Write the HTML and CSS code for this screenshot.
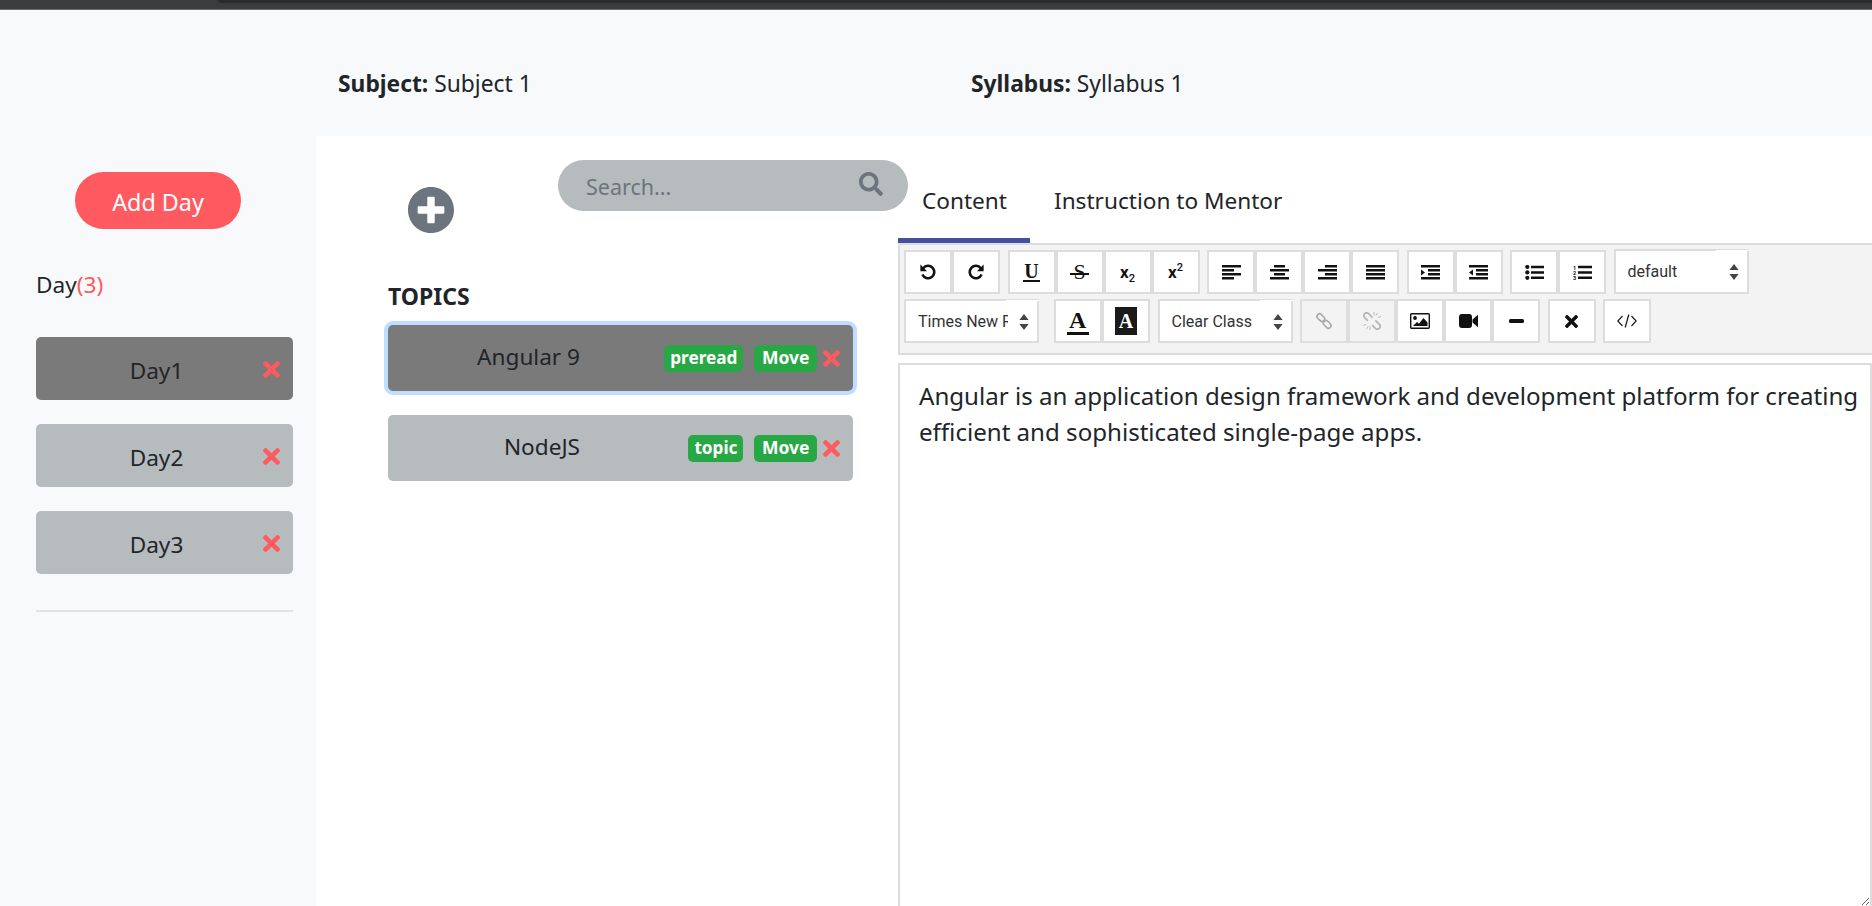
FILE: index.html
```html
<!DOCTYPE html>
<html lang="en">
<head>
<meta charset="utf-8">
<title>Syllabus editor</title>
<link rel="stylesheet" href="styles.css">
</head>
<body>
<div class="topbar"><div class="topbar-inner"></div></div>
<header class="head">
  <div class="head-subject"><b>Subject:</b> Subject 1</div>
  <div class="head-syllabus"><b>Syllabus:</b> Syllabus 1</div>
</header>
<main class="main">
  <aside class="side">
    <button class="add-day">Add Day</button>
    <div class="day-count">Day<span class="red">(3)</span></div>
    <div class="day active"><span class="day-name">Day1</span><svg class="x" viewBox="0 80 352 352"><path d="M242.72 256l100.07-100.07c12.28-12.28 12.28-32.19 0-44.48l-22.24-22.24c-12.28-12.28-32.19-12.28-44.48 0L176 189.28 75.93 89.21c-12.28-12.28-32.19-12.28-44.48 0L9.21 111.45c-12.28 12.28-12.28 32.19 0 44.48L109.28 256 9.21 356.07c-12.28 12.28-12.28 32.19 0 44.48l22.24 22.24c12.28 12.28 32.2 12.28 44.48 0L176 322.72l100.07 100.07c12.28 12.28 32.2 12.28 44.48 0l22.24-22.24c12.28-12.28 12.28-32.19 0-44.48L242.72 256z"/></svg></div>
    <div class="day"><span class="day-name">Day2</span><svg class="x" viewBox="0 80 352 352"><path d="M242.72 256l100.07-100.07c12.28-12.28 12.28-32.19 0-44.48l-22.24-22.24c-12.28-12.28-32.19-12.28-44.48 0L176 189.28 75.93 89.21c-12.28-12.28-32.19-12.28-44.48 0L9.21 111.45c-12.28 12.28-12.28 32.19 0 44.48L109.28 256 9.21 356.07c-12.28 12.28-12.28 32.19 0 44.48l22.24 22.24c12.28 12.28 32.2 12.28 44.48 0L176 322.72l100.07 100.07c12.28 12.28 32.2 12.28 44.48 0l22.24-22.24c12.28-12.28 12.28-32.19 0-44.48L242.72 256z"/></svg></div>
    <div class="day"><span class="day-name">Day3</span><svg class="x" viewBox="0 80 352 352"><path d="M242.72 256l100.07-100.07c12.28-12.28 12.28-32.19 0-44.48l-22.24-22.24c-12.28-12.28-32.19-12.28-44.48 0L176 189.28 75.93 89.21c-12.28-12.28-32.19-12.28-44.48 0L9.21 111.45c-12.28 12.28-12.28 32.19 0 44.48L109.28 256 9.21 356.07c-12.28 12.28-12.28 32.19 0 44.48l22.24 22.24c12.28 12.28 32.2 12.28 44.48 0L176 322.72l100.07 100.07c12.28 12.28 32.2 12.28 44.48 0l22.24-22.24c12.28-12.28 12.28-32.19 0-44.48L242.72 256z"/></svg></div>
    <hr class="rule">
  </aside>
  <section class="topics">
    <div class="search"><span class="search-text">Search...</span><svg class="search-ic" viewBox="0 0 512 512"><path d="M505 442.7L405.3 343c-4.5-4.5-10.6-7-17-7H372c27.6-35.3 44-79.7 44-128C416 93.1 322.9 0 208 0S0 93.1 0 208s93.1 208 208 208c48.3 0 92.7-16.4 128-44v16.3c0 6.4 2.5 12.5 7 17l99.7 99.7c9.4 9.4 24.6 9.4 33.9 0l28.3-28.3c9.4-9.4 9.4-24.6.1-34zM208 336c-70.7 0-128-57.2-128-128 0-70.7 57.2-128 128-128 70.7 0 128 57.2 128 128 0 70.7-57.2 128-128 128z"/></svg></div>
    <svg class="plus" viewBox="8 8 496 496"><path d="M256 8C119 8 8 119 8 256s111 248 248 248 248-111 248-248S393 8 256 8zm144 276c0 6.6-5.4 12-12 12h-92v92c0 6.6-5.4 12-12 12h-56c-6.6 0-12-5.4-12-12v-92h-92c-6.6 0-12-5.4-12-12v-56c0-6.6 5.4-12 12-12h92v-92c0-6.6 5.4-12 12-12h56c6.6 0 12 5.4 12 12v92h92c6.6 0 12 5.4 12 12v56z"/></svg>
    <h2 class="topics-title">TOPICS</h2>
    <div class="topic active"><span class="topic-name">Angular 9</span><span class="badge badge-first">preread</span><span class="badge">Move</span><svg class="x" viewBox="0 80 352 352"><path d="M242.72 256l100.07-100.07c12.28-12.28 12.28-32.19 0-44.48l-22.24-22.24c-12.28-12.28-32.19-12.28-44.48 0L176 189.28 75.93 89.21c-12.28-12.28-32.19-12.28-44.48 0L9.21 111.45c-12.28 12.28-12.28 32.19 0 44.48L109.28 256 9.21 356.07c-12.28 12.28-12.28 32.19 0 44.48l22.24 22.24c12.28 12.28 32.2 12.28 44.48 0L176 322.72l100.07 100.07c12.28 12.28 32.2 12.28 44.48 0l22.24-22.24c12.28-12.28 12.28-32.19 0-44.48L242.72 256z"/></svg></div>
    <div class="topic"><span class="topic-name">NodeJS</span><span class="badge badge-first">topic</span><span class="badge">Move</span><svg class="x" viewBox="0 80 352 352"><path d="M242.72 256l100.07-100.07c12.28-12.28 12.28-32.19 0-44.48l-22.24-22.24c-12.28-12.28-32.19-12.28-44.48 0L176 189.28 75.93 89.21c-12.28-12.28-32.19-12.28-44.48 0L9.21 111.45c-12.28 12.28-12.28 32.19 0 44.48L109.28 256 9.21 356.07c-12.28 12.28-12.28 32.19 0 44.48l22.24 22.24c12.28 12.28 32.2 12.28 44.48 0L176 322.72l100.07 100.07c12.28 12.28 32.2 12.28 44.48 0l22.24-22.24c12.28-12.28 12.28-32.19 0-44.48L242.72 256z"/></svg></div>
  </section>
  <section class="content">
    <nav class="tabs">
      <span class="tab tab-on">Content</span>
      <span class="tab">Instruction to Mentor</span>
    </nav>
    <div class="toolbar">
      <div class="row">
        <div class="grp">
          <span class="btn"><svg class="ic ic-sq" viewBox="0 0 18 18"><path d="M4.2 5.2A6.2 6.2 0 1 1 3.4 11.5" fill="none" stroke="#111" stroke-width="2.6"/><path d="M1.4 1.6v6.6h6.6z"/></svg></span>
          <span class="btn"><svg class="ic ic-sq" viewBox="0 0 18 18"><path d="M13.8 5.2A6.2 6.2 0 1 0 14.6 11.5" fill="none" stroke="#111" stroke-width="2.6"/><path d="M16.6 1.6v6.6H10z"/></svg></span>
        </div>
        <div class="grp">
          <span class="btn"><span class="serif under">U</span></span>
          <span class="btn"><span class="serif thin strike">S</span></span>
          <span class="btn"><span class="script">x<sub>2</sub></span></span>
          <span class="btn"><span class="script">x<sup>2</sup></span></span>
        </div>
        <div class="grp">
          <span class="btn"><svg class="ic" viewBox="0 0 19 15"><path d="M0 0h19v2.6H0zM0 4h12v2.6H0zM0 8h19v2.6H0zM0 12h12v2.6H0z"/></svg></span>
          <span class="btn"><svg class="ic" viewBox="0 0 19 15"><path d="M4 0h11v2.6H4zM0 4h19v2.6H0zM4 8h11v2.6H4zM0 12h19v2.6H0z"/></svg></span>
          <span class="btn"><svg class="ic" viewBox="0 0 19 15"><path d="M7 0h12v2.6H7zM0 4h19v2.6H0zM7 8h12v2.6H7zM0 12h19v2.6H0z"/></svg></span>
          <span class="btn"><svg class="ic" viewBox="0 0 19 15"><path d="M0 0h19v2.6H0zM0 4h19v2.6H0zM0 8h19v2.6H0zM0 12h19v2.6H0z"/></svg></span>
        </div>
        <div class="grp">
          <span class="btn"><svg class="ic" viewBox="0 0 19 15"><path d="M0 0h19v2.6H0zM7 4h12v2.6H7zM7 8h12v2.6H7zM0 12h19v2.6H0zM0 4.4l4 3-4 3z"/></svg></span>
          <span class="btn"><svg class="ic" viewBox="0 0 19 15"><path d="M0 0h19v2.6H0zM7 4h12v2.6H7zM7 8h12v2.6H7zM0 12h19v2.6H0zM4 4.4l-4 3 4 3z"/></svg></span>
        </div>
        <div class="grp">
          <span class="btn"><svg class="ic" viewBox="0 0 19 15"><circle cx="2.3" cy="2" r="2.1"/><circle cx="2.3" cy="7.4" r="2.1"/><circle cx="2.3" cy="12.8" r="2.1"/><path d="M6 .8h13v2.5H6zM6 6.2h13v2.5H6zM6 11.6h13v2.5H6z"/></svg></span>
          <span class="btn"><svg class="ic" viewBox="0 0 19 15"><text class="ol-num" x="0" y="4.6">1</text><text class="ol-num" x="0" y="9.8">2</text><text class="ol-num" x="0" y="15">3</text><path d="M5 .8h14v2.5H5zM5 6.2h14v2.5H5zM5 11.6h14v2.5H5z"/></svg></span>
        </div>
        <div class="sel sel-style"><span class="sel-text">default</span><svg class="caret" viewBox="0 0 10 16"><path d="M5 0l4.6 6H.4zM5 16l4.6-6H.4z"/></svg></div>
      </div>
      <div class="row">
        <div class="sel sel-font"><span class="sel-text">Times New Roman</span><svg class="caret" viewBox="0 0 10 16"><path d="M5 0l4.6 6H.4zM5 16l4.6-6H.4z"/></svg></div>
        <div class="grp grp-color">
          <span class="btn"><span class="fore"><span class="serif">A</span></span></span>
          <span class="btn"><span class="back"><span class="serif">A</span></span></span>
        </div>
        <div class="sel sel-clear"><span class="sel-text">Clear Class</span><svg class="caret" viewBox="0 0 10 16"><path d="M5 0l4.6 6H.4zM5 16l4.6-6H.4z"/></svg></div>
        <div class="grp">
          <span class="btn off"><svg class="ic ic-sq" viewBox="0 0 18 18"><g fill="none" stroke="#aaa" stroke-width="1.6"><rect x="1.5" y="3" width="8.6" height="5.2" rx="2.6" transform="rotate(45 5.8 5.6)"/><rect x="7.9" y="9.8" width="8.6" height="5.2" rx="2.6" transform="rotate(45 12.2 12.4)"/></g></svg></span>
          <span class="btn off"><svg class="ic ic-sq" viewBox="0 0 18 18"><g fill="none" stroke="#b5b5b5" stroke-width="1.7"><g transform="rotate(45 9 9)"><path d="M7 6.2H1.5a2.8 2.8 0 0 0 0 5.6H6M11 6.2h5.5a2.8 2.8 0 0 1 0 5.6H12"/></g><path stroke-width=".9" d="M11 0v3.4M14.5 .8l-1.6 2.8M18 4.5l-3 1.2M0 13.5l3-1.2M3.5 17.2l1.6-2.8M7 18v-3.4"/></g></svg></span>
          <span class="btn"><svg class="ic ic-pic" viewBox="0 0 20 16"><rect x=".7" y=".7" width="18.6" height="14.6" rx="1" fill="none" stroke="#111" stroke-width="1.4"/><circle cx="5" cy="5" r="1.9"/><path d="M3 13l4-4 2 1.8L13.5 5 17.5 9.5V13z"/></svg></span>
          <span class="btn"><svg class="ic ic-vid" viewBox="0 0 19 14"><rect x="0" y="0" width="13" height="14" rx="3"/><path d="M13.5 5.5L19 .8v12.4l-5.5-4.7z"/></svg></span>
          <span class="btn"><svg class="ic ic-vid" viewBox="0 0 19 14"><rect x="2" y="5" width="15" height="4" rx="1.5"/></svg></span>
        </div>
        <div class="grp">
          <span class="btn"><svg class="ic ic-close" viewBox="0 80 352 352"><path d="M242.72 256l100.07-100.07c12.28-12.28 12.28-32.19 0-44.48l-22.24-22.24c-12.28-12.28-32.19-12.28-44.48 0L176 189.28 75.93 89.21c-12.28-12.28-32.19-12.28-44.48 0L9.21 111.45c-12.28 12.28-12.28 32.19 0 44.48L109.28 256 9.21 356.07c-12.28 12.28-12.28 32.19 0 44.48l22.24 22.24c12.28 12.28 32.2 12.28 44.48 0L176 322.72l100.07 100.07c12.28 12.28 32.2 12.28 44.48 0l22.24-22.24c12.28-12.28 12.28-32.19 0-44.48L242.72 256z"/></svg></span>
        </div>
        <div class="grp">
          <span class="btn"><svg class="ic ic-code" viewBox="0 0 20 14"><path d="M5.5 2L.8 7l4.7 5M14.5 2l4.7 5-4.7 5M11.8 .5L8.2 13.5" fill="none" stroke="#222" stroke-width="1.3"/></svg></span>
        </div>
      </div>
    </div>
    <div class="editor">Angular is an application design framework and development platform for creating efficient and sophisticated single-page apps.</div>
  </section>
</main>
</body>
</html>
```
FILE: styles.css
```css
* { box-sizing: border-box; }
html, body { margin: 0; height: 906px; overflow: hidden; }
body {
  background: #f8f9fa;
  color: #212529;
  font-family: "Noto Sans", "Open Sans", sans-serif;
  font-size: 22.6px;
}
.topbar {
  height: 10px;
  background: #3c3c3c;
  border-bottom: 1px solid #6a6a6a;
  padding-left: 218px;
}
.topbar-inner {
  height: 3px;
  background: #2b2b2b;
  border-bottom-left-radius: 4px;
}
.head {
  height: 126px;
  display: flex;
  align-items: center;
  padding: 20px 0 0 338px;
  font-size: 22.8px;
}
.head-subject { width: 633px; }
.main { display: flex; height: 772px; }
.side {
  width: 316px;
  flex: none;
  padding: 36px 23px 0 36px;
  display: flex;
  flex-direction: column;
}
.add-day {
  align-self: flex-start;
  margin-left: 39px;
  width: 166px;
  height: 57px;
  padding: 2px 0 0;
  border: 0;
  border-radius: 29px;
  background: #ff5a5f;
  color: #fff;
  font: inherit;
  font-size: 23.3px;
}
.day-count { margin-top: 41px; margin-bottom: 37px; line-height: 30px; }
.red { color: #ff5a5f; }
.day {
  height: 63px;
  margin-bottom: 24px;
  border-radius: 5px;
  background: #b6bbbd;
  display: flex;
  align-items: center;
  padding-right: 13px;
}
.day.active, .topic.active { background: #7a7a7a; }
.day-name { flex: 1; text-align: center; padding: 3px 0 0 14px; }
.x { width: 17px; height: 17px; fill: #ff5a5f; flex: none; }
.day .x { margin-top: 2px; }
.rule { width: 100%; margin: 12px 0 0; border: 0; border-top: 2px solid #e0e2e4; }
.topics {
  width: 582px;
  flex: none;
  background: #fff;
  padding: 51px 0 0 72px;
  position: relative;
}
.search {
  position: absolute;
  left: 242px;
  top: 24px;
  width: 350px;
  height: 51px;
  border-radius: 26px;
  background: #b6bbbd;
  color: #6c757d;
  display: flex;
  align-items: center;
  justify-content: space-between;
  padding: 2px 25px 0 28px;
  font-size: 21.5px;
  z-index: 1;
}
.search-ic { width: 24px; height: 24px; fill: #6c757d; margin-bottom: 6px; }
.plus { display: block; width: 46px; height: 46px; margin-left: 20px; fill: #6c757d; }
.topics-title { margin: 48px 0 14px; font-size: 23px; line-height: 30px; font-weight: 700; }
.topic {
  width: 465px;
  height: 66px;
  margin-bottom: 24px;
  border-radius: 5px;
  background: #b6bbbd;
  display: flex;
  align-items: center;
  padding-right: 13px;
}
.topic.active { box-shadow: 0 0 0 4px #bfdeff; }
.topic-name { width: 192px; text-align: right; font-size: 22.6px; padding-bottom: 3px; white-space: nowrap; }
.badge {
  height: 27px;
  padding: 0 7.5px;
  margin-left: 11px;
  margin-right: 6px;
  border-radius: 5px;
  background: #28a745;
  color: #fff;
  font-size: 17.5px;
  font-weight: 700;
  line-height: 25px;
}
.badge-first { margin-left: auto; margin-right: 0; padding: 0 6px; font-size: 17.2px; }
.content { flex: 1; background: #fff; min-width: 0; display: flex; flex-direction: column; }
.tabs { height: 107px; flex: none; display: flex; align-items: flex-end; font-size: 22.6px; }
.tab { padding: 0 25px 22px 24px; line-height: 30px; border-bottom: 5px solid transparent; }
.tab-on { border-bottom-color: #4450a0; width: 132px; }
.toolbar {
  height: 112px;
  flex: none;
  border: 2px solid #ddd;
  border-right: 0;
  background: #f3f3f3;
  padding: 5px 4px;
  display: flex;
  flex-direction: column;
  gap: 5px;
  font-family: Roboto, sans-serif;
}
.row { display: flex; gap: 7.5px; }
.grp { display: flex; }
.grp-color { margin: 0 0 0 7.5px; }
.btn {
  width: 48px;
  height: 44px;
  border: 2px solid #ddd;
  background: #fff;
  display: flex;
  align-items: center;
  justify-content: center;
  color: #111;
}
.btn.off { background: #f3f3f3; }
.ic { width: 19px; height: 15px; fill: #111; }
.ic-sq { width: 18px; height: 18px; }
.ic-pic { width: 20px; height: 16px; }
.ic-vid { width: 19px; height: 14px; }
.ic-close { width: 13px; height: 13px; }
.ic-code { width: 20px; height: 14px; }
.serif { font-family: "Liberation Serif", serif; font-weight: 700; font-size: 20px; line-height: 20px; }
.under { border-bottom: 2px solid #111; line-height: 18px; padding: 0 1px; }
.thin { font-weight: 400; }
.strike { font-size: 22px; position: relative; }
.strike::after {
  content: "";
  position: absolute;
  left: -3px;
  right: -3px;
  top: 11px;
  height: 1.5px;
  background: #111;
}
.script { font-size: 17px; font-weight: 700; font-family: Roboto, sans-serif; }
.script sub, .script sup { font-size: 11px; font-weight: 500; line-height: 0; }
.ol-num { font-size: 5.5px; font-family: Roboto, sans-serif; font-weight: 700; }
.fore { border-bottom: 3px solid #111; padding: 0 2px; line-height: 21px; display: block; height: 27px; }
.fore .serif { font-size: 24px; line-height: 24px; display: block; width: 18px; }
.back { width: 22px; height: 28px; background: #1a1a1a; color: #fff; display: flex; align-items: center; justify-content: center; }
.sel {
  height: 44px;
  width: 135px;
  padding-left: 12px;
  border: 2px solid #ddd;
  background: #fff;
  display: flex;
  align-items: center;
  font-size: 16px;
  color: #333;
  position: relative;
}
.sel::after {
  content: "";
  position: absolute;
  top: -1px;
  right: -2px;
  width: 33px;
  height: 1px;
  background: #fff;
}
.sel-text { white-space: nowrap; overflow: hidden; }
.caret { position: absolute; right: 8px; top: 13px; width: 10px; height: 16px; fill: #444; }
.sel-style { margin-top: -1px; height: 45px; }
.sel-font .sel-text { width: 90px; }
.editor {
  margin-top: 8px;
  height: 545px;
  flex: none;
  border: 2px solid #ddd;
  padding: 13px 2px 14px 19px;
  font-size: 24.1px;
  line-height: 36px;
  background: #fff;
  overflow: auto;
  resize: both;
}
```
